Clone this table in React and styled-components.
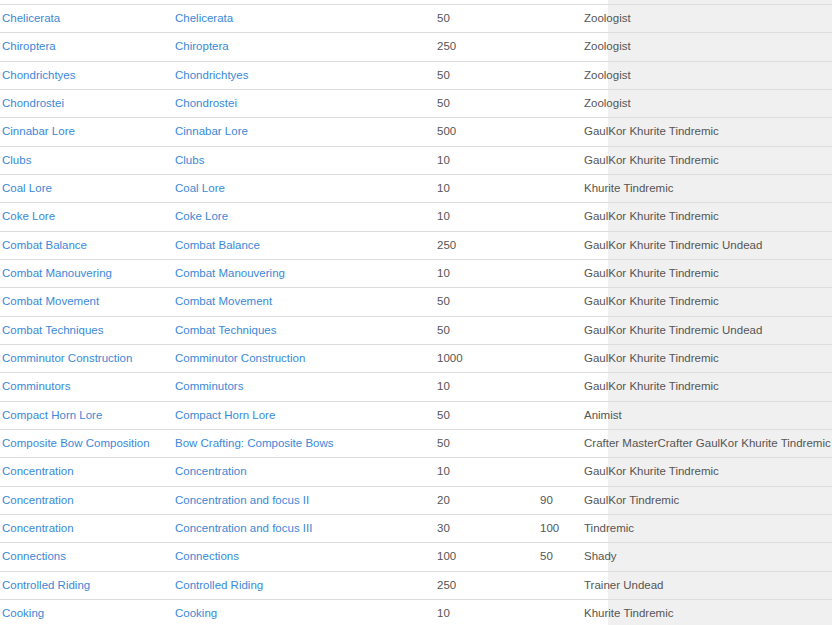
import React from "react";
import styled, { createGlobalStyle } from "styled-components";

const Global = createGlobalStyle`
  html, body { margin: 0; padding: 0; background: #f0f0f0; overflow: hidden; }
  body { font-family: "Liberation Sans", Arial, sans-serif; }
`;

const Page = styled.div`
  width: 608px;
  min-height: 625px;
  background: #fff;
  padding-top: 4px;
  box-sizing: border-box;
`;

const Table = styled.table`
  width: 832px;
  border-collapse: collapse;
  table-layout: fixed;
  font-size: 11.5px;
`;

const Row = styled.tr`
  border-top: 1px solid #dddddd;
`;

const Cell = styled.td`
  padding: 5px 2px;
  line-height: 17.33px;
  color: #555;
  white-space: nowrap;
  overflow: visible;
  vertical-align: middle;
`;

const Link = styled.a`
  color: #3a89d8;
  text-decoration: none;
`;

const rows = [
  ["Chelicerata", "Chelicerata", "50", "", "Zoologist"],
  ["Chiroptera", "Chiroptera", "250", "", "Zoologist"],
  ["Chondrichtyes", "Chondrichtyes", "50", "", "Zoologist"],
  ["Chondrostei", "Chondrostei", "50", "", "Zoologist"],
  ["Cinnabar Lore", "Cinnabar Lore", "500", "", "GaulKor Khurite Tindremic"],
  ["Clubs", "Clubs", "10", "", "GaulKor Khurite Tindremic"],
  ["Coal Lore", "Coal Lore", "10", "", "Khurite Tindremic"],
  ["Coke Lore", "Coke Lore", "10", "", "GaulKor Khurite Tindremic"],
  ["Combat Balance", "Combat Balance", "250", "", "GaulKor Khurite Tindremic Undead"],
  ["Combat Manouvering", "Combat Manouvering", "10", "", "GaulKor Khurite Tindremic"],
  ["Combat Movement", "Combat Movement", "50", "", "GaulKor Khurite Tindremic"],
  ["Combat Techniques", "Combat Techniques", "50", "", "GaulKor Khurite Tindremic Undead"],
  ["Comminutor Construction", "Comminutor Construction", "1000", "", "GaulKor Khurite Tindremic"],
  ["Comminutors", "Comminutors", "10", "", "GaulKor Khurite Tindremic"],
  ["Compact Horn Lore", "Compact Horn Lore", "50", "", "Animist"],
  ["Composite Bow Composition", "Bow Crafting: Composite Bows", "50", "", "Crafter MasterCrafter GaulKor Khurite Tindremic"],
  ["Concentration", "Concentration", "10", "", "GaulKor Khurite Tindremic"],
  ["Concentration", "Concentration and focus II", "20", "90", "GaulKor Tindremic"],
  ["Concentration", "Concentration and focus III", "30", "100", "Tindremic"],
  ["Connections", "Connections", "100", "50", "Shady"],
  ["Controlled Riding", "Controlled Riding", "250", "", "Trainer Undead"],
  ["Cooking", "Cooking", "10", "", "Khurite Tindremic"],
];

export default function App() {
  return (
    <>
      <Global />
      <Page>
        <Table>
          <colgroup>
            <col style={{ width: 173 }} />
            <col style={{ width: 262 }} />
            <col style={{ width: 103 }} />
            <col style={{ width: 44 }} />
            <col style={{ width: 250 }} />
          </colgroup>
          <tbody>
            {rows.map((r, i) => (
              <Row key={i}>
                <Cell><Link href="#">{r[0]}</Link></Cell>
                <Cell><Link href="#">{r[1]}</Link></Cell>
                <Cell>{r[2]}</Cell>
                <Cell>{r[3]}</Cell>
                <Cell>{r[4]}</Cell>
              </Row>
            ))}
          </tbody>
        </Table>
      </Page>
    </>
  );
}
